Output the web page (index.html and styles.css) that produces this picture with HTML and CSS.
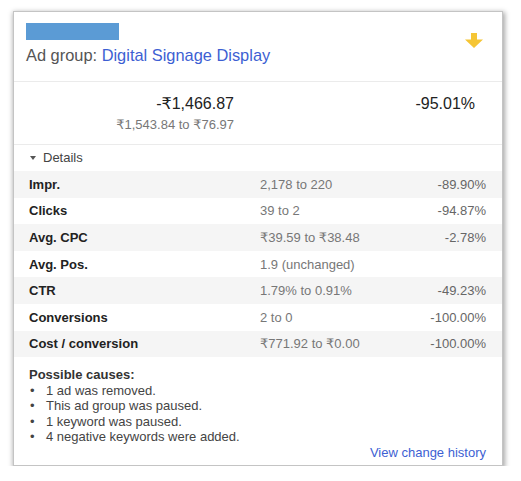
FILE: index.html
```html
<!DOCTYPE html>
<html>
<head>
<meta charset="utf-8">
<link rel="stylesheet" href="styles.css">
</head>
<body>
<div class="card">
  <div class="header">
    <div class="head-main">
      <div class="redact"></div>
      <div class="title">Ad group: <a class="link" href="#">Digital Signage Display</a></div>
    </div>
    <svg class="arrow" width="18" height="15" viewBox="0 0 18 15"><path d="M6 0H12V6.5H18L9 15L0 6.5H6Z" fill="#f5c535"/></svg>
  </div>
  <div class="summary">
    <div class="sum-col">
      <div class="big">-₹1,466.87</div>
      <div class="sub">₹1,543.84 to ₹76.97</div>
    </div>
    <div class="sum-col">
      <div class="big">-95.01%</div>
    </div>
  </div>
  <div class="details-toggle"><span class="tri"></span>Details</div>
  <div class="rows">
    <div class="row alt"><span class="lbl">Impr.</span><span class="val">2,178 to 220</span><span class="pct">-89.90%</span></div>
    <div class="row"><span class="lbl">Clicks</span><span class="val">39 to 2</span><span class="pct">-94.87%</span></div>
    <div class="row alt"><span class="lbl">Avg. CPC</span><span class="val">₹39.59 to ₹38.48</span><span class="pct">-2.78%</span></div>
    <div class="row"><span class="lbl">Avg. Pos.</span><span class="val">1.9 (unchanged)</span><span class="pct"></span></div>
    <div class="row alt"><span class="lbl">CTR</span><span class="val">1.79% to 0.91%</span><span class="pct">-49.23%</span></div>
    <div class="row"><span class="lbl">Conversions</span><span class="val">2 to 0</span><span class="pct">-100.00%</span></div>
    <div class="row alt"><span class="lbl">Cost / conversion</span><span class="val">₹771.92 to ₹0.00</span><span class="pct">-100.00%</span></div>
  </div>
  <div class="causes">
    <div class="causes-title">Possible causes:</div>
    <ul class="cause-list">
      <li>1 ad was removed.</li>
      <li>This ad group was paused.</li>
      <li>1 keyword was paused.</li>
      <li>4 negative keywords were added.</li>
    </ul>
    <div class="history"><a class="link" href="#">View change history</a></div>
  </div>
</div>
</body>
</html>
```
FILE: styles.css
```css
html, body {
  margin: 0;
  background: #ffffff;
}
body {
  padding: 11px 0 0 13px;
  font-family: "Liberation Sans", Arial, "DejaVu Sans", sans-serif;
  color: #333;
}
.card {
  width: 488px;
  height: 453px;
  border: 1px solid #c4c4c4;
  background: #fff;
  box-shadow: 1px 2px 5px 1px rgba(0,0,0,0.35);
}
.link {
  color: #3d5fd3;
  text-decoration: none;
}
.header {
  display: flex;
  justify-content: space-between;
  padding: 11px 19px 0 12px;
  height: 58px;
  border-bottom: 1px solid #ebebeb;
}
.redact {
  width: 93px;
  height: 17px;
  background: #5b9bd5;
}
.title {
  margin-top: 5px;
  font-size: 16.4px;
  line-height: 20px;
  color: #555;
}
.arrow {
  margin-top: 10px;
}
.summary {
  display: grid;
  grid-template-columns: 220px 241px;
  padding: 12px 0 10px;
  height: 40px;
  border-bottom: 1px solid #ebebeb;
}
.sum-col {
  text-align: right;
}
.big {
  font-size: 16px;
  line-height: 20px;
  color: #222;
}
.sub {
  margin-top: 3px;
  font-size: 13px;
  line-height: 16px;
  color: #777;
}
.details-toggle {
  height: 26px;
  line-height: 26px;
  padding-left: 16px;
  font-size: 13px;
  color: #444;
  display: flex;
  align-items: center;
}
.tri {
  width: 0;
  height: 0;
  border-left: 3px solid transparent;
  border-right: 3px solid transparent;
  border-top: 4px solid #555;
  margin-right: 7px;
}
.row {
  display: grid;
  grid-template-columns: 246px 1fr auto;
  align-items: center;
  height: 26.6px;
  font-size: 13px;
  padding-right: 16px;
}
.row.alt {
  background: #f5f5f5;
}
.lbl {
  padding-left: 15px;
  font-weight: bold;
  color: #222;
}
.val {
  color: #777;
}
.pct {
  color: #666;
  text-align: right;
}
.causes {
  padding: 10px 16px 0 15px;
  font-size: 13px;
}
.causes-title {
  font-weight: bold;
  line-height: 16px;
  color: #333;
}
.cause-list {
  list-style: none;
  margin: 0;
  padding: 0;
  line-height: 15.2px;
  color: #444;
}
.cause-list li {
  display: flex;
}
.cause-list li::before {
  content: "\2022";
  width: 16px;
  padding-left: 1px;
  flex: none;
}
.history {
  text-align: right;
  line-height: 16px;
  margin-top: 1px;
}
```
